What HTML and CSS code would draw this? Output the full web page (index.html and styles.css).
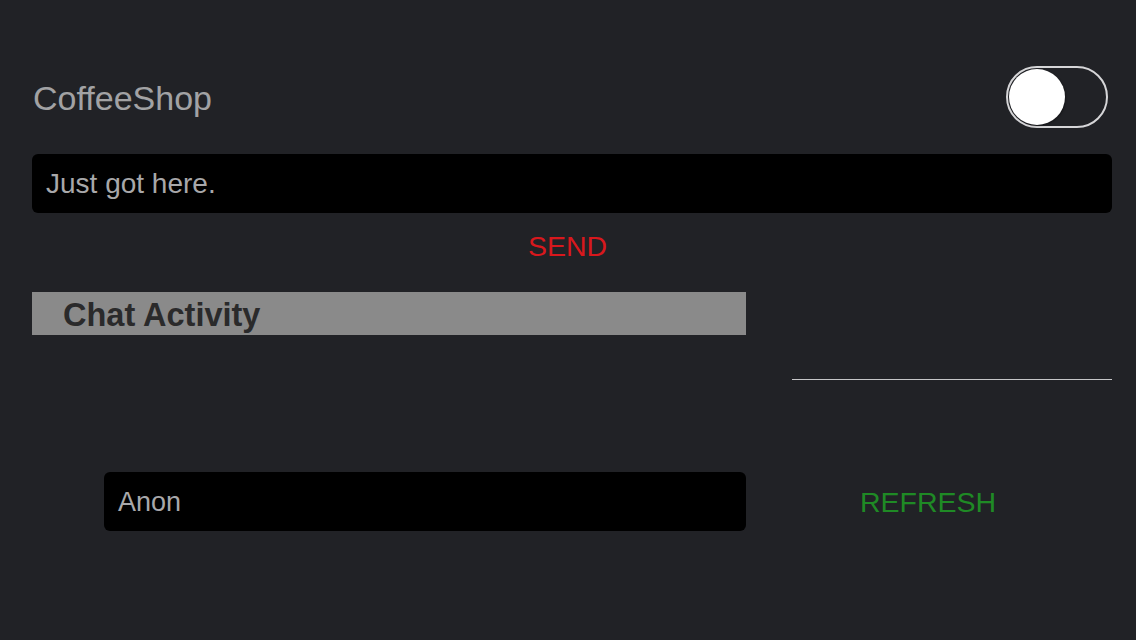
FILE: index.html
```html
<!DOCTYPE html>
<html>
<head>
<meta charset="utf-8">
<link rel="stylesheet" href="styles.css">
</head>
<body>
<div class="screen">
  <div class="header">
    <div class="title">CoffeeShop</div>
    <div class="toggle"><div class="knob"></div></div>
  </div>
  <div class="field msg">Just got here.</div>
  <div class="send-row"><span class="send">SEND</span></div>
  <div class="bottom">
    <div class="left">
      <div class="section">Chat Activity</div>
      <div class="field name">Anon</div>
    </div>
    <div class="right">
      <div class="rule"></div>
      <div class="refresh">REFRESH</div>
    </div>
  </div>
</div>
</body>
</html>
```

FILE: styles.css
```css
html, body {
  margin: 0;
  padding: 0;
  background: #212226;
  width: 1136px;
  height: 640px;
  overflow: hidden;
  font-family: "Liberation Sans", Arial, sans-serif;
}
.screen {
  display: flex;
  flex-direction: column;
  padding: 66px 24px 0 32px;
}
.header {
  display: flex;
  align-items: center;
  justify-content: space-between;
  height: 62px;
  padding-right: 4px;
}
.title {
  color: #a2a2a4;
  font-size: 34px;
  padding-left: 1px;
  padding-top: 2px;
}
.toggle {
  box-sizing: border-box;
  width: 102px;
  height: 62px;
  border: 2.5px solid #d6d6d8;
  border-radius: 31px;
  padding: 0 1px;
  display: flex;
  align-items: center;
}
.knob {
  width: 56px;
  height: 56px;
  border-radius: 50%;
  background: #ffffff;
  box-shadow: 1px 1px 2px rgba(0,0,0,0.35);
}
.field {
  box-sizing: border-box;
  background: #000000;
  border-radius: 6px;
  color: #a8a8aa;
  font-size: 28px;
  height: 59px;
  display: flex;
  align-items: center;
  padding-left: 14px;
  padding-top: 1px;
}
.msg {
  margin-top: 26px;
}
.send-row {
  height: 66px;
  display: flex;
  align-items: center;
  justify-content: center;
  padding-top: 1px;
  padding-right: 9px;
  box-sizing: border-box;
}
.send {
  color: #d8181d;
  font-size: 28.5px;
}
.bottom {
  display: flex;
  margin-top: 13px;
  gap: 46px;
}
.left {
  width: 714px;
  display: flex;
  flex-direction: column;
}
.section {
  background: #8a8a8a;
  color: #2a2a2b;
  font-weight: bold;
  font-size: 32.5px;
  height: 43px;
  box-sizing: border-box;
  padding-left: 31px;
  line-height: 47px;
  overflow: hidden;
}
.name {
  margin-top: 137px;
  margin-left: 72px;
  font-size: 27px;
}
.right {
  width: 320px;
  display: flex;
  flex-direction: column;
}
.rule {
  margin-top: 87px;
  height: 1px;
  background: #c6c6c8;
}
.refresh {
  margin-top: 92px;
  height: 59px;
  display: flex;
  align-items: center;
  padding-left: 68px;
  color: #1f8a25;
  font-size: 28.5px;
  padding-top: 2px;
  box-sizing: border-box;
}
```
